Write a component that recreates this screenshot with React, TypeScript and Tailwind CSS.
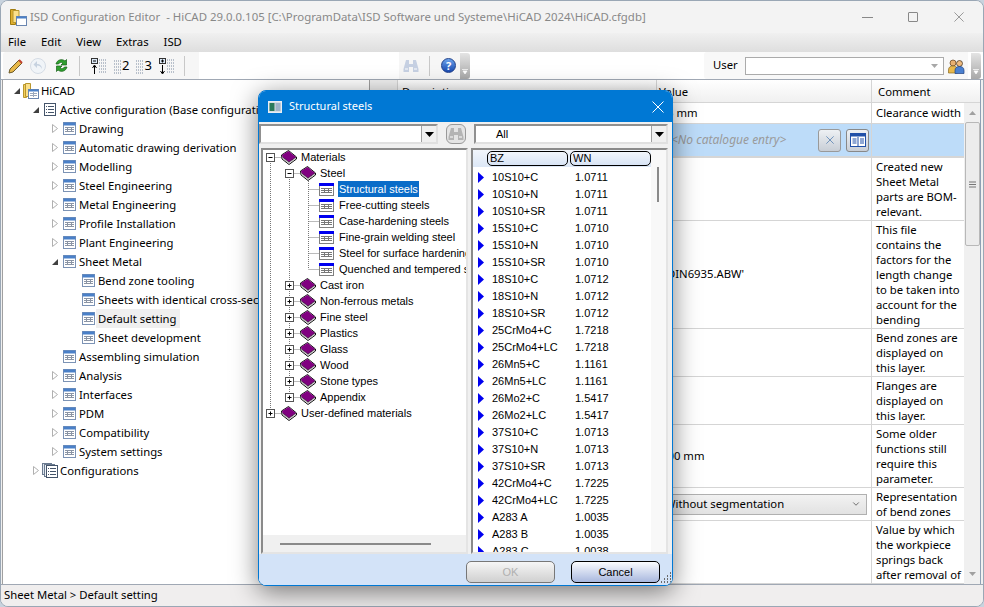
import { ChevronDown } from 'lucide-react'

type Kind = 'blank' | 'line' | 'tee' | 'corner' | 'minusTop' | 'minus' | 'plus' | 'plusLast'

const font = "font-['Noto_Sans',sans-serif]"

function TreeGlyph({ kind }: { kind: Kind }) {
  const dots = { stroke: '#777', strokeDasharray: '1 1', fill: 'none' }
  const hasBox = kind === 'minusTop' || kind === 'minus' || kind === 'plus' || kind === 'plusLast'
  return (
    <svg width="19" height="16" className="shrink-0">
      {kind === 'line' && <path d="M8.5 0V16" {...dots} />}
      {(kind === 'tee' || kind === 'minus' || kind === 'plus') && <path d="M8.5 0V16" {...dots} />}
      {kind === 'corner' && <path d="M8.5 0V8" {...dots} />}
      {kind === 'minusTop' && <path d="M8.5 8V16" {...dots} />}
      {kind === 'plusLast' && <path d="M8.5 0V8" {...dots} />}
      {kind !== 'blank' && kind !== 'line' && <path d="M8.5 8.5H19" {...dots} />}
      {hasBox && <rect x="4.5" y="4.5" width="8" height="8" fill="#fff" stroke="#555" />}
      {hasBox && <path d="M6.5 8.5h4" stroke="#000" />}
      {(kind === 'plus' || kind === 'plusLast') && <path d="M8.5 6.5v4" stroke="#000" />}
    </svg>
  )
}

function Book() {
  return (
    <svg width="16" height="15" viewBox="0 0 16 15" className="shrink-0">
      <path d="M0.500 5L7.500 0.500 15.500 7V9L8 14.500 1 9z" fill="#fff" stroke="#111" />
      <path d="M1 5L7.500 1 15 7 8 12 1.500 7z" fill="#800080" />
      <path d="M2 8.500l6 4.500 7-5" stroke="#999" fill="none" strokeWidth="0.700" />
      <path d="M1.500 7L8 12l7-5" stroke="#2a002a" fill="none" strokeWidth="0.700" />
    </svg>
  )
}

function MatTable() {
  return (
    <svg width="15" height="13" viewBox="0 0 15 13" className="shrink-0">
      <rect x="0.500" y="0.500" width="14" height="12" fill="#fff" stroke="#808080" />
      <rect x="0" y="0" width="15" height="3" fill="#0000f0" />
      <path d="M2 5.500h11M2 7.500h11M2 9.500h11M5.500 5v5M9.500 5v5" stroke="#777" />
    </svg>
  )
}

function TableIcon() {
  return (
    <svg width="13" height="13" viewBox="0 0 13 13" className="shrink-0">
      <rect x="0.500" y="0.500" width="12" height="12" fill="#fff" stroke="#7c93b5" />
      <rect x="0.500" y="0.500" width="12" height="3" fill="#4a80c8" />
      <path d="M2 5.500h9M2 7.500h9M2 9.500h9M4.500 5v5M8.500 5v5" stroke="#8b95a5" />
    </svg>
  )
}

function ListIcon() {
  return (
    <svg width="12" height="13" viewBox="0 0 12 13" className="shrink-0">
      <rect x="0.500" y="0.500" width="11" height="12" fill="#fff" stroke="#44546a" />
      <path d="M2 3.500h1M4 3.500h6M2 6.500h1M4 6.500h6M2 9.500h1M4 9.500h6" stroke="#44546a" />
    </svg>
  )
}

function ConfigsIcon() {
  return (
    <svg width="16" height="15" viewBox="0 0 16 15" className="shrink-0">
      <rect x="0.500" y="0.500" width="9" height="11" fill="#dfe6ee" stroke="#6b7b90" />
      <rect x="2.500" y="1.500" width="10" height="12" fill="#eef2f6" stroke="#6b7b90" />
      <rect x="4.500" y="2.500" width="11" height="12" fill="#fff" stroke="#44546a" />
      <path d="M6 5.500h1M8 5.500h6M6 8.500h1M8 8.500h6M6 11.500h1M8 11.500h6" stroke="#44546a" />
    </svg>
  )
}

function FolderIcon() {
  return (
    <svg width="16" height="16" viewBox="0 0 16 16" className="shrink-0">
      <path d="M0.500 1.500h3v13h-3z" fill="#f4cf5c" stroke="#b8962e" />
      <path d="M2.500 0.500h5v13h-5z" fill="#fbe08a" stroke="#b8962e" />
      <rect x="5.500" y="6.500" width="10" height="9" fill="#fff" stroke="#6a86b0" />
      <rect x="5.500" y="6.500" width="10" height="2" fill="#4a80c8" />
      <path d="M7 10.500h7M7 12.500h7M10.500 9v5" stroke="#9aa8bc" />
    </svg>
  )
}

function Expanded() {
  return (
    <svg width="8" height="8" viewBox="0 0 8 8" className="shrink-0">
      <path d="M7 1v6H1z" fill="#404040" />
    </svg>
  )
}

function Collapsed() {
  return (
    <svg width="6" height="9" viewBox="0 0 6 9" className="shrink-0">
      <path d="M0.500 0.500l5 4-5 4z" fill="#fff" stroke="#b0b0b0" />
    </svg>
  )
}

type LeftNode = {
  label: string
  arrow?: 'open' | 'closed'
  cls: string
  icon: 'table' | 'list' | 'folder' | 'configs'
  active?: boolean
}

const lvl0 = 'pl-[10px]'
const lvl1 = 'pl-[29px]'
const lvl2 = 'pl-[48px]'
const lvl3 = 'pl-[67px]'

const leftTree: LeftNode[] = [
  { label: 'HiCAD', arrow: 'open', cls: lvl0, icon: 'folder' },
  { label: 'Active configuration (Base configuration)', arrow: 'open', cls: lvl1, icon: 'list' },
  { label: 'Drawing', arrow: 'closed', cls: lvl2, icon: 'table' },
  { label: 'Automatic drawing derivation', arrow: 'closed', cls: lvl2, icon: 'table' },
  { label: 'Modelling', arrow: 'closed', cls: lvl2, icon: 'table' },
  { label: 'Steel Engineering', arrow: 'closed', cls: lvl2, icon: 'table' },
  { label: 'Metal Engineering', arrow: 'closed', cls: lvl2, icon: 'table' },
  { label: 'Profile Installation', arrow: 'closed', cls: lvl2, icon: 'table' },
  { label: 'Plant Engineering', arrow: 'closed', cls: lvl2, icon: 'table' },
  { label: 'Sheet Metal', arrow: 'open', cls: lvl2, icon: 'table' },
  { label: 'Bend zone tooling', cls: lvl3, icon: 'table' },
  { label: 'Sheets with identical cross-sections', cls: lvl3, icon: 'table' },
  { label: 'Default setting', cls: lvl3, icon: 'table', active: true },
  { label: 'Sheet development', cls: lvl3, icon: 'table' },
  { label: 'Assembling simulation', cls: lvl2, icon: 'table' },
  { label: 'Analysis', arrow: 'closed', cls: lvl2, icon: 'table' },
  { label: 'Interfaces', arrow: 'closed', cls: lvl2, icon: 'table' },
  { label: 'PDM', arrow: 'closed', cls: lvl2, icon: 'table' },
  { label: 'Compatibility', arrow: 'closed', cls: lvl2, icon: 'table' },
  { label: 'System settings', arrow: 'closed', cls: lvl2, icon: 'table' },
  { label: 'Configurations', arrow: 'closed', cls: lvl1, icon: 'configs' },
]

const materials: { label: string; glyphs: Kind[]; type: 'book' | 'table'; selected?: boolean }[] = [
  { label: 'Materials', glyphs: ['minusTop'], type: 'book' },
  { label: 'Steel', glyphs: ['line', 'minusTop'], type: 'book' },
  { label: 'Structural steels', glyphs: ['line', 'line', 'tee'], type: 'table', selected: true },
  { label: 'Free-cutting steels', glyphs: ['line', 'line', 'tee'], type: 'table' },
  { label: 'Case-hardening steels', glyphs: ['line', 'line', 'tee'], type: 'table' },
  { label: 'Fine-grain welding steel', glyphs: ['line', 'line', 'tee'], type: 'table' },
  { label: 'Steel for surface hardening', glyphs: ['line', 'line', 'tee'], type: 'table' },
  { label: 'Quenched and tempered steels', glyphs: ['line', 'line', 'corner'], type: 'table' },
  { label: 'Cast iron', glyphs: ['line', 'plus'], type: 'book' },
  { label: 'Non-ferrous metals', glyphs: ['line', 'plus'], type: 'book' },
  { label: 'Fine steel', glyphs: ['line', 'plus'], type: 'book' },
  { label: 'Plastics', glyphs: ['line', 'plus'], type: 'book' },
  { label: 'Glass', glyphs: ['line', 'plus'], type: 'book' },
  { label: 'Wood', glyphs: ['line', 'plus'], type: 'book' },
  { label: 'Stone types', glyphs: ['line', 'plus'], type: 'book' },
  { label: 'Appendix', glyphs: ['line', 'plusLast'], type: 'book' },
  { label: 'User-defined materials', glyphs: ['plusLast'], type: 'book' },
]

const steels: [string, string][] = [
  ['10S10+C', '1.0711'], ['10S10+N', '1.0711'], ['10S10+SR', '1.0711'],
  ['15S10+C', '1.0710'], ['15S10+N', '1.0710'], ['15S10+SR', '1.0710'],
  ['18S10+C', '1.0712'], ['18S10+N', '1.0712'], ['18S10+SR', '1.0712'],
  ['25CrMo4+C', '1.7218'], ['25CrMo4+LC', '1.7218'],
  ['26Mn5+C', '1.1161'], ['26Mn5+LC', '1.1161'],
  ['26Mo2+C', '1.5417'], ['26Mo2+LC', '1.5417'],
  ['37S10+C', '1.0713'], ['37S10+N', '1.0713'], ['37S10+SR', '1.0713'],
  ['42CrMo4+C', '1.7225'], ['42CrMo4+LC', '1.7225'],
  ['A283 A', '1.0035'], ['A283 B', '1.0035'], ['A283 C', '1.0038'],
]

function CloseGlyph({ size, color }: { size: number; color: string }) {
  return (
    <svg width={size} height={size} viewBox="0 0 12 12" className="shrink-0">
      <path d="M0.500 0.500l11 11M11.500 0.500l-11 11" stroke={color} fill="none" />
    </svg>
  )
}

function ComboArrow() {
  return (
    <span className="w-[15px] h-full bg-[#f0f0f0] border-l border-[#a0a0a0] flex items-center justify-center shrink-0">
      <svg width="9" height="5" viewBox="0 0 9 5"><path d="M0 0h9L4.500 5z" fill="#000" /></svg>
    </span>
  )
}

function ToolbarIcons() {
  return (
    <>
      <svg width="16" height="16" viewBox="0 0 16 16" className="ml-[5px] shrink-0">
        <path d="M2 11L11 2l3 3-9 9-4 1z" fill="#e8b84a" stroke="#6b5a2a" />
        <path d="M11 2l3 3" stroke="#c04030" strokeWidth="2" />
      </svg>
      <svg width="16" height="16" viewBox="0 0 16 16" className="ml-[6px] shrink-0">
        <circle cx="8" cy="8" r="7.500" fill="#f0f4f8" stroke="#d4dbe4" />
        <path d="M12 11c0-3-2-5-5-5V3L3.500 6.500 7 10V7.500c2 0 4 1 5 3.500z" fill="#c6d2e0" />
      </svg>
      <svg width="15" height="15" viewBox="0 0 15 15" className="ml-[8px] shrink-0">
        <path d="M2 6a5.500 5.500 0 0 1 9-3l1.500-1.500V7H7l2-2a3 3 0 0 0-4.500 1z" fill="#2ea02e" stroke="#156015" strokeWidth="0.7" />
        <path d="M13 9a5.500 5.500 0 0 1-9 3l-1.500 1.500V8H8l-2 2a3 3 0 0 0 4.500-1z" fill="#2ea02e" stroke="#156015" strokeWidth="0.7" />
      </svg>
      <span className="ml-[10px] w-px h-5 bg-[#c8c8c8] shrink-0" />
      <svg width="18" height="18" viewBox="0 0 18 18" className="ml-[10px] shrink-0">
        <rect x="1.500" y="1.500" width="6" height="5" fill="#dbe8f6" stroke="#333" />
        <path d="M3 4h3" stroke="#000" />
        <path d="M4.500 17V9M2.500 11l2-3 2 3" stroke="#000" fill="none" />
        <path d="M9 3h7M9 6h7M9 9h7M9 12h7M9 15h7" stroke="#7a8aa0" strokeDasharray="1 1" />
      </svg>
      <span className="ml-[6px] flex items-center shrink-0">
        <svg width="8" height="16" viewBox="0 0 8 16"><path d="M0 3h7M0 6h7M0 9h7M0 12h7M0 15h7" stroke="#7a8aa0" strokeDasharray="1 1" /></svg>
        <span className="text-[13px] leading-none text-black">2</span>
      </span>
      <span className="ml-[7px] flex items-center shrink-0">
        <svg width="8" height="16" viewBox="0 0 8 16"><path d="M0 3h7M0 6h7M0 9h7M0 12h7M0 15h7" stroke="#7a8aa0" strokeDasharray="1 1" /></svg>
        <span className="text-[13px] leading-none text-black">3</span>
      </span>
      <svg width="18" height="18" viewBox="0 0 18 18" className="ml-[6px] shrink-0">
        <rect x="1.500" y="1.500" width="6" height="5" fill="#dbe8f6" stroke="#333" />
        <path d="M3 4h3M4.500 2.500v3" stroke="#000" />
        <path d="M4.500 8v8M2.500 14l2 3 2-3" stroke="#000" fill="none" />
        <path d="M9 3h7M9 6h7M9 9h7M9 12h7M9 15h7" stroke="#7a8aa0" strokeDasharray="1 1" />
      </svg>
      <span className="ml-[8px] w-px h-5 bg-[#c8c8c8] shrink-0" />
    </>
  )
}

function Binoculars({ color }: { color: string }) {
  return (
    <svg width="16" height="14" viewBox="0 0 16 14" className="shrink-0">
      <path d="M3 1h3v4h4V1h3l2.500 9v3H10V8H6v5H0.500v-3z" fill={color} />
      <path d="M2 10h3M11 10h3" stroke="#fff" />
    </svg>
  )
}

function Grip() {
  return (
    <span className="w-[10px] h-[26px] bg-gradient-to-b from-[#e4e4e4] to-[#a8a8a8] rounded-r-[3px] flex flex-col items-center justify-end pb-[5px] shrink-0">
      <svg width="6" height="5" viewBox="0 0 6 5"><path d="M0 0.500h6M1 2h4l-2 3z" fill="#fff" stroke="#fff" strokeWidth="0.700" /></svg>
    </span>
  )
}

export default function App() {
  return (
    <div className={`relative w-[984px] h-[607px] overflow-hidden bg-[#c8d3de] text-[11.3px] text-black ${font}`}>
      <div className="w-[984px] h-[607px] rounded-lg border border-[#9aa7b5] bg-[#f0f0f0] flex flex-col overflow-hidden">
        {/* title bar */}
        <div className="h-[32px] shrink-0 bg-[#f3f3f3] flex items-center pl-[9px]">
          <svg width="17" height="17" viewBox="0 0 17 17" className="shrink-0">
            <path d="M0.500 0.500h5v15h-5z" fill="#e0b030" stroke="#a07c10" />
            <path d="M3 1.500h6v12H3z" fill="#fbe08a" stroke="#b8962e" />
            <rect x="6.500" y="7.500" width="10" height="9" fill="#fff" stroke="#6a86b0" />
            <rect x="6.500" y="7.500" width="10" height="2" fill="#4a80c8" />
          </svg>
          <span className="ml-[3px] text-[#888] text-[11.4px] whitespace-pre">ISD Configuration Editor  - HiCAD 29.0.0.105 [C:\ProgramData\ISD Software und Systeme\HiCAD 2024\HiCAD.cfgdb]</span>
          <div className="ml-auto flex items-center text-[#8a8a8a]">
            <span className="w-[11px] h-px bg-[#888] mr-[35px]" />
            <span className="w-[10px] h-[10px] border border-[#888] rounded-[1px] mr-[36px]" />
            <span className="mr-[19px] flex"><CloseGlyph size={10} color="#888" /></span>
          </div>
        </div>

        {/* menu bar */}
        <div className="h-[19px] shrink-0 bg-gradient-to-b from-[#f0f0f0] to-[#dedede] flex items-center pl-[7px] gap-[15px]">
          <span>File</span>
          <span>Edit</span>
          <span>View</span>
          <span>Extras</span>
          <span>ISD</span>
        </div>

        {/* toolbars */}
        <div className="h-[27px] shrink-0 bg-white flex items-center">
          <div className="ml-[2px] w-[196px] h-full bg-[#f6f6f6] rounded-l-[3px] flex items-center">
            <ToolbarIcons />
          </div>
          <div className="w-[200px] h-full bg-white" />
          <div className="w-[61px] h-full bg-[#f6f6f6] flex items-center pl-[4px]">
            <Binoculars color="#c6d0e2" />
            <span className="ml-[10px] w-px h-5 bg-[#c8c8c8]" />
            <span className="ml-[11px] w-[15px] h-[15px] rounded-full bg-gradient-to-b from-[#6da4ec] to-[#1a48b0] border border-[#20408a] text-white text-[11px] font-bold leading-[13px] text-center">?</span>
          </div>
          <Grip />
          <div className="ml-auto h-full w-[264px] bg-[#f8f8f8] rounded-l-[3px] flex items-center pl-[9px]">
            <span className="w-[32px]">User</span>
            <div className="w-[199px] h-[18px] bg-white border border-[#ababab] flex items-center justify-end pr-[5px]">
              <svg width="7" height="4" viewBox="0 0 7 4"><path d="M0 0h7L3.500 4z" fill="#a8a8a8" /></svg>
            </div>
            <svg width="17" height="16" viewBox="0 0 17 16" className="ml-[4px] shrink-0">
              <circle cx="5" cy="5" r="3" fill="#e8b070" stroke="#5a3a18" strokeWidth="0.700" />
              <path d="M0.500 15v-3c0-3 2-4 4.500-4s4.500 1 4.500 4v3z" fill="#e8b84a" stroke="#8a6a20" strokeWidth="0.700" />
              <circle cx="11.500" cy="5.500" r="3" fill="#eebb80" stroke="#3a2a18" strokeWidth="0.700" />
              <path d="M7 15.500v-3c0-3 2-4 4.500-4s4.500 1 4.500 4v3z" fill="#4a80d0" stroke="#204080" strokeWidth="0.700" />
            </svg>
          </div>
          <span className="ml-[3px] mr-[2px]"><Grip /></span>
        </div>

        {/* main */}
        <div className="flex-1 min-h-0 flex border-t border-[#a0a8b4] bg-[#f0f0f0] pl-px pr-[2px]">
          <div className="w-[368px] shrink-0 bg-white border-l border-r border-[#a0a0a0] overflow-hidden pt-px">
            {leftTree.map(n => (
              <div key={n.label} className={`h-[19px] flex items-center whitespace-nowrap ${n.cls}`}>
                <span className="w-[8px] flex justify-center shrink-0">
                  {n.arrow === 'open' && <Expanded />}
                  {n.arrow === 'closed' && <Collapsed />}
                </span>
                <span className="ml-[2px] w-[16px] flex justify-center shrink-0">
                  {n.icon === 'table' && <TableIcon />}
                  {n.icon === 'list' && <ListIcon />}
                  {n.icon === 'folder' && <FolderIcon />}
                  {n.icon === 'configs' && <ConfigsIcon />}
                </span>
                <span className={`pl-[2px] pr-[3px] leading-[19px] ${n.active ? 'bg-[#efefef]' : ''}`}>{n.label}</span>
              </div>
            ))}
          </div>

          <div className="flex-1 min-w-0 ml-[2px] bg-white border-r border-[#8fa0b5] flex flex-col overflow-hidden">
            <div className="h-[23px] shrink-0 flex items-center border-b border-[#d5d5d5] bg-gradient-to-b from-white to-[#f0f0f0]">
              <div className="w-[26px] h-full bg-[#f0f0f0] border-r border-[#d5d5d5]" />
              <div className="w-[259px] h-full pl-[4px] border-r border-[#d5d5d5] leading-[23px]">Description</div>
              <div className="w-[215px] h-full pl-[2px] border-r border-[#d5d5d5] leading-[23px]">Value</div>
              <div className="w-[92px] h-full pl-[6px] leading-[23px]">Comment</div>
            </div>
            <div className="flex-1 min-h-0 flex">
              <div className="flex-1 min-w-0 overflow-hidden">
                <div className="h-[21px] flex border-b border-[#d5d5d5]">
                  <div className="w-[285px] border-r border-[#d5d5d5]" />
                  <div className="w-[215px] border-r border-[#d5d5d5] pl-[10px] leading-[20px]">5 mm</div>
                  <div className="flex-1 pl-[4px] leading-[20px] whitespace-nowrap">Clearance width</div>
                </div>
                <div className="h-[34px] flex bg-[#bddcf9] border-b-2 border-[#d6d6d6]">
                  <div className="w-[285px] border-r border-[#d5d5d5]" />
                  <div className="w-[215px] border-r border-[#d5d5d5] pl-[14px] flex items-center">
                    <span className="italic text-[12px] text-[#9a9a9a] whitespace-nowrap">&lt;No catalogue entry&gt;</span>
                    <button className="ml-auto w-[23px] h-[23px] rounded-[3px] border border-[#999] bg-gradient-to-b from-[#eef1f4] to-[#c8ced6] flex items-center justify-center">
                      <CloseGlyph size={8} color="#3d6ea8" />
                    </button>
                    <button className="ml-[5px] mr-[2px] w-[23px] h-[23px] rounded-[3px] border border-[#888] bg-gradient-to-b from-[#eef1f4] to-[#c8ced6] flex items-center justify-center">
                      <svg width="16" height="14" viewBox="0 0 16 14">
                        <rect x="0.500" y="0.500" width="15" height="13" fill="#fff" stroke="#2050a8" />
                        <rect x="0.500" y="0.500" width="15" height="3" fill="#2050a8" />
                        <path d="M8 4v9M2.500 6h4M2.500 8h4M2.500 10h4M10 6h4M10 8h4M10 10h4" stroke="#2050a8" />
                      </svg>
                    </button>
                  </div>
                  <div className="flex-1" />
                </div>
                <Row h="h-[63px]" lines={['Created new', 'Sheet Metal', 'parts are BOM-', 'relevant.']} />
                <Row h="h-[108px]" value="DIN6935.ABW'" lines={['This file', 'contains the', 'factors for the', 'length change', 'to be taken into', 'account for the', 'bending']} />
                <Row h="h-[48px]" lines={['Bend zones are', 'displayed on', 'this layer.']} />
                <Row h="h-[48px]" lines={['Flanges are', 'displayed on', 'this layer.']} />
                <div className="h-[63px] flex border-b border-[#d5d5d5]">
                  <div className="w-[285px] border-r border-[#d5d5d5]" />
                  <div className="w-[215px] border-r border-[#d5d5d5] pl-[4px] flex items-center whitespace-nowrap">100 mm</div>
                  <div className="flex-1 pl-[4px] pt-px leading-[15px] whitespace-nowrap">
                    <div>Some older</div>
                    <div>functions still</div>
                    <div>require this</div>
                    <div>parameter.</div>
                  </div>
                </div>
                <div className="h-[33px] flex border-b border-[#d5d5d5]">
                  <div className="w-[285px] border-r border-[#d5d5d5]" />
                  <div className="w-[215px] border-r border-[#d5d5d5] flex items-center pl-[2px] pr-[4px]">
                    <div className="flex-1 h-[21px] pl-[5px] flex items-center border border-[#b0b0b0] bg-gradient-to-b from-[#f2f2f2] to-[#e2e2e2] whitespace-nowrap">
                      Without segmentation
                      <ChevronDown size={10} className="ml-auto mr-[5px] text-[#555]" />
                    </div>
                  </div>
                  <div className="flex-1 pl-[4px] pt-px leading-[15px]">Representation<br />of bend zones</div>
                </div>
                <Row h="h-[63px]" lines={['Value by which', 'the workpiece', 'springs back', 'after removal of']} />
              </div>
              {/* scrollbar */}
              <div className="w-[16px] shrink-0 bg-[#f0f0f0] flex flex-col items-center">
                <svg width="7" height="4" viewBox="0 0 7 4" className="mt-[8px]"><path d="M0 4h7L3.500 0z" fill="#a0a0a0" /></svg>
                <div className="mt-[7px] w-[15px] h-[124px] rounded-[2px] bg-[#ececec] border border-[#b8b8b8] flex items-center justify-center">
                  <svg width="7" height="7" viewBox="0 0 7 7"><path d="M0 1h7M0 3.500h7M0 6h7" stroke="#777" /></svg>
                </div>
                <svg width="7" height="4" viewBox="0 0 7 4" className="mt-auto mb-[8px]"><path d="M0 0h7L3.500 4z" fill="#a0a0a0" /></svg>
              </div>
            </div>
          </div>
        </div>

        {/* status bar */}
        <div className="h-[22px] shrink-0 bg-[#f0eeee] border-t border-[#a0a8b4] pl-[3px] leading-[20px]">Sheet Metal &gt; Default setting</div>
      </div>

      {/* dialog */}
      <div className="absolute left-[258px] top-[90px] w-[415px] h-[496px] rounded-lg bg-[#d3e3f8] border border-[#0078d4] shadow-[0_6px_26px_rgba(0,0,0,0.5)] flex flex-col overflow-hidden font-['Liberation_Sans',sans-serif] text-[11px]">
        <div className={`h-[31px] shrink-0 bg-[#0078d4] flex items-center pl-[9px] text-white text-[11px] ${font}`}>
          <svg width="14" height="12" viewBox="0 0 14 12" className="shrink-0">
            <rect x="0.500" y="0.500" width="13" height="11" fill="#d8dee4" stroke="#e8eef4" />
            <rect x="1.500" y="2" width="5" height="8" fill="#2a7a5a" />
            <rect x="7.500" y="2" width="5" height="8" fill="#9fb4c8" />
          </svg>
          <span className="ml-[7px]">Structural steels</span>
          <span className="ml-auto mr-[8px] flex"><CloseGlyph size={12} color="#fff" /></span>
        </div>

        <div className="bg-[#f0f0f0] flex-1 min-h-0 flex flex-col">
          <div className="h-[24px] shrink-0 flex items-center">
            <div className="w-[179px] h-[20px] bg-white border-2 border-t-[#909090] border-l-[#909090] border-b-[#e0e0e0] border-r-[#e0e0e0] flex justify-end">
              <ComboArrow />
            </div>
            <button className="ml-[8px] w-[20px] h-[20px] rounded-[6px] border border-[#999] bg-[#e4e4e4] flex items-center justify-center">
              <Binoculars color="#b4b4b4" />
            </button>
            <div className="ml-[8px] w-[194px] h-[20px] bg-white border-2 border-t-[#909090] border-l-[#909090] border-b-[#e0e0e0] border-r-[#e0e0e0] flex items-center pl-[20px]">
              <span className="flex-1">All</span>
              <ComboArrow />
            </div>
          </div>

          <div className="h-[406px] shrink-0 flex mt-[2px] pl-[2px]">
            {/* material tree */}
            <div className="w-[207px] shrink-0 border-2 border-t-[#8a8a8a] border-l-[#8a8a8a] border-b-[#e4e4e4] border-r-[#e4e4e4] bg-white flex flex-col overflow-hidden">
              <div className="flex-1 min-h-0 overflow-hidden -mt-px -ml-px">
                {materials.map(m => (
                  <div key={m.label} className="h-[16px] flex items-center whitespace-nowrap">
                    {m.glyphs.map((g, i) => <TreeGlyph key={i} kind={g} />)}
                    {m.type === 'book' ? <Book /> : <MatTable />}
                    <span className={`px-px leading-[16px] ${m.type === 'book' ? 'ml-[3px]' : 'ml-[4px]'} ${m.selected ? 'bg-[#0a6cc8] text-white' : ''}`}>{m.label}</span>
                  </div>
                ))}
              </div>
              <div className="h-[17px] shrink-0 bg-[#f0f0f0] flex items-center pl-[17px]">
                <span className="w-[151px] h-[2px] bg-[#8a8a8a]" />
              </div>
            </div>

            {/* steel list */}
            <div className="ml-[3px] w-[197px] shrink-0 border-2 border-t-[#8a8a8a] border-l-[#8a8a8a] border-b-[#e4e4e4] border-r-[#e4e4e4] bg-white flex overflow-hidden">
              <div className="flex-1 min-w-0 overflow-hidden">
                <div className="h-[17px] flex items-center gap-[2px] pl-[14px] bg-gradient-to-b from-[#f2f6fc] to-[#dce7f6]">
                  <span className="w-[81px] h-[15px] rounded-[5px] border border-black pl-[2px] leading-[12px] bg-gradient-to-b from-[#f2f6fc] to-[#d8e4f5]">BZ</span>
                  <span className="w-[81px] h-[15px] rounded-[5px] border border-black pl-[2px] leading-[12px] bg-gradient-to-b from-[#f2f6fc] to-[#d8e4f5]">WN</span>
                </div>
                <div className="pt-[2px]">
                  {steels.map(([bz, wn]) => (
                    <div key={bz} className="h-[17px] flex items-center pl-[5px] whitespace-nowrap">
                      <svg width="6" height="11" viewBox="0 0 6 11" className="shrink-0"><path d="M0 0l6 5.500L0 11z" fill="#0000f0" /></svg>
                      <span className="ml-[8px] w-[83px]">{bz}</span>
                      <span>{wn}</span>
                    </div>
                  ))}
                </div>
              </div>
              <div className="w-[15px] shrink-0 bg-[#f8f8f8] pl-[6px] pt-[17px]">
                <div className="w-[2px] h-[35px] bg-[#8a8a8a]" />
              </div>
            </div>
          </div>

          {/* buttons */}
          <div className="flex-1 bg-[#d3e3f8] flex items-start pt-[7px] pl-[207px] relative">
            <button className="w-[89px] h-[22px] rounded-[5px] border border-[#777] bg-gradient-to-b from-[#f6f6f6] to-[#d0d0d0] text-[#b0b0b0] leading-[20px]">OK</button>
            <button className="ml-[16px] w-[89px] h-[22px] rounded-[5px] border border-black bg-gradient-to-b from-[#fbfcfe] to-[#a9b8de] leading-[20px]">Cancel</button>
            <svg width="11" height="14" viewBox="0 0 11 14" className="absolute right-0 bottom-0">
              <path d="M9 2h1M6 5h1M9 5h1M3 8h1M6 8h1M9 8h1M0 11h1M3 11h1M6 11h1M9 11h1" stroke="#6b6b6b" strokeWidth="2" />
            </svg>
          </div>
        </div>
      </div>
    </div>
  )
}

function Row({ h, lines, value }: { h: string; lines: string[]; value?: string }) {
  return (
    <div className={`${h} flex border-b border-[#d5d5d5]`}>
      <div className="w-[285px] border-r border-[#d5d5d5]" />
      <div className="w-[215px] border-r border-[#d5d5d5] pl-[10px] flex items-center whitespace-nowrap">{value}</div>
      <div className="flex-1 pl-[4px] pt-px leading-[15px] whitespace-nowrap overflow-hidden">
        {lines.map(l => <div key={l}>{l}</div>)}
      </div>
    </div>
  )
}
